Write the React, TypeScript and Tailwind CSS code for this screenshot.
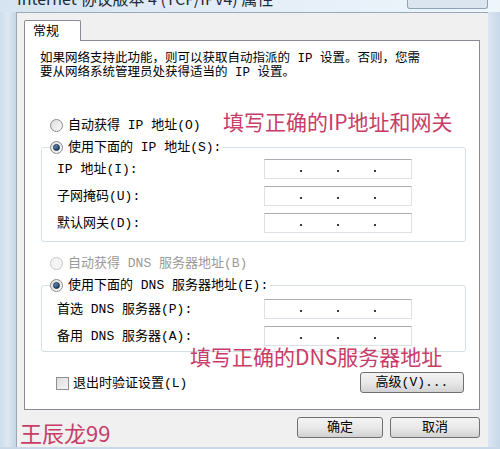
const dialogFont = {
  fontFamily: '"Liberation Mono", "Noto Sans CJK SC", monospace',
}
const noteFont = {
  fontFamily: '"Noto Sans CJK SC", "Noto Sans", sans-serif',
}

function Radio({ checked = false, disabled = false }: { checked?: boolean; disabled?: boolean }) {
  return (
    <span
      className={`flex h-[13px] w-[13px] shrink-0 items-center justify-center rounded-full border ${
        disabled
          ? 'border-[#c6c6c6] bg-[#f4f4f4]'
          : 'border-[#8a8a8a] bg-linear-to-br from-[#dcdcdc] to-[#fbfbfb]'
      }`}
    >
      {checked && (
        <span className="h-[7px] w-[7px] rounded-full border border-[#1d2a3a] bg-linear-to-br from-[#6aa5db] to-[#15314f]" />
      )}
    </span>
  )
}

function RadioRow({
  label,
  checked,
  disabled,
}: {
  label: string
  checked?: boolean
  disabled?: boolean
}) {
  return (
    <div className="flex h-[16px] items-center gap-[5px]">
      <Radio checked={checked} disabled={disabled} />
      <span className={`whitespace-pre ${disabled ? 'text-[#9a9a9a]' : 'text-black'}`}>{label}</span>
    </div>
  )
}

function IpBox() {
  return (
    <div className="flex h-[20px] w-[148px] items-end border border-[#dde1e7] border-t-[#a9acb2] bg-white pb-[6px]">
      <span className="flex-1" />
      <span className="h-[2px] w-[2px] bg-[#3c3c3c]" />
      <span className="flex-1" />
      <span className="h-[2px] w-[2px] bg-[#3c3c3c]" />
      <span className="flex-1" />
      <span className="h-[2px] w-[2px] bg-[#3c3c3c]" />
      <span className="flex-1" />
    </div>
  )
}

function FieldRow({ label }: { label: string }) {
  return (
    <div className="flex items-center">
      <span className="ml-[8px] w-[207px] whitespace-pre">{label}</span>
      <IpBox />
    </div>
  )
}

function WinButton({ label, width }: { label: string; width: string }) {
  return (
    <button
      className={`flex h-[21px] ${width} items-center justify-center rounded-[3px] border border-[#707070] bg-linear-to-b from-[#f3f3f3] via-[#e9e9e9] to-[#d2d2d2] text-[13px] text-black`}
    >
      {label}
    </button>
  )
}

export default function App() {
  return (
    <div
      className="relative flex h-[449px] w-[500px] flex-col overflow-hidden bg-[#d2e0ed] text-[13px] leading-[13px]"
      style={dialogFont}
    >
      {/* title bar, only the lower edge is visible */}
      <div className="flex h-[12px] shrink-0 overflow-hidden bg-linear-to-r from-[#d6e4f1] via-[#e4eef8] to-[#eef5fb]">
        <div className="flex-1 overflow-hidden pl-[17px]">
          <div
            className="-mt-[10px] whitespace-pre text-[16px] leading-[16px] text-[#1e2b38]"
            style={noteFont}
          >
            Internet 协议版本 4 (TCP/IPv4) 属性
          </div>
        </div>
        <div className="mr-[12px] h-[9px] w-[81px] rounded-b-[3px] border border-t-0 border-[#8fa2b7] bg-[#dbe5ef]" />
      </div>

      <div className="flex min-h-0 flex-1">
        <div className="w-[16px] shrink-0 bg-linear-to-r from-[#cfdeec] via-[#dde8f2] to-[#c4d5e6]" />

        <div className="flex h-[435px] w-[472px] shrink-0 flex-col border-l border-t border-[#9ba8b6] bg-[#f0f0f0] pl-[7px] pr-[8px] pt-[7px]">
          {/* tab */}
          <div className="relative z-10 flex h-[21px] w-[57px] items-center rounded-t-[2px] border border-b-0 border-[#898c95] bg-white pl-[8px]">
            常规
          </div>

          {/* panel */}
          <div className="-mt-px flex h-[370px] w-[456px] flex-col border border-[#898c95] bg-white">
            <p className="ml-[15px] mt-[12px] whitespace-pre text-[12.5px] leading-[13.5px]">
              如果网络支持此功能，则可以获取自动指派的 IP 设置。否则，您需{'\n'}要从网络系统管理员处获得适当的 IP 设置。
            </p>

            <div className="ml-[25px] mt-[37px]">
              <RadioRow label="自动获得 IP 地址(O)" />
            </div>

            <fieldset className="ml-[16px] mt-[6px] w-[425px] rounded-[3px] border border-[#d5dfe5] pb-[8px] pl-[7px]">
              <legend className="ml-px pr-[2px]">
                <RadioRow label="使用下面的 IP 地址(S):" checked />
              </legend>
              <div className="mt-[4px] flex flex-col gap-[7px]">
                <FieldRow label="IP 地址(I):" />
                <FieldRow label="子网掩码(U):" />
                <FieldRow label="默认网关(D):" />
              </div>
            </fieldset>

            <div className="ml-[25px] mt-[13px]">
              <RadioRow label="自动获得 DNS 服务器地址(B)" disabled />
            </div>

            <fieldset className="ml-[16px] mt-[6px] w-[425px] rounded-[3px] border border-[#d5dfe5] pb-[5px] pl-[7px]">
              <legend className="ml-px pr-[2px]">
                <RadioRow label="使用下面的 DNS 服务器地址(E):" checked />
              </legend>
              <div className="mt-[6px] flex flex-col gap-[7px]">
                <FieldRow label="首选 DNS 服务器(P):" />
                <FieldRow label="备用 DNS 服务器(A):" />
              </div>
            </fieldset>

            <div className="ml-[31px] mr-[15px] mt-[20px] flex items-center justify-between">
              <div className="flex items-center gap-[4px] pt-[2px]">
                <span className="h-[13px] w-[13px] border border-[#8e8f8f] bg-linear-to-br from-[#dcdcdc] to-[#f8f8f8]" />
                <span className="whitespace-pre">退出时验证设置(L)</span>
              </div>
              <WinButton label="高级(V)..." width="w-[104px]" />
            </div>
          </div>

          {/* dialog buttons */}
          <div className="mt-[7px] flex justify-end gap-[7px]">
            <WinButton label="确定" width="w-[86px]" />
            <WinButton label="取消" width="w-[90px]" />
          </div>
        </div>

        <div className="flex-1 bg-linear-to-r from-[#dbe6f1] to-[#c8d8e8]" />
      </div>
      <div className="h-[2px] shrink-0 bg-[#c8d8e8]" />

      {/* annotations drawn over the screenshot */}
      <div
        className="absolute left-[223px] top-[111px] whitespace-pre text-[21px] leading-none text-[#c83c68]"
        style={noteFont}
      >
        填写正确的IP地址和网关
      </div>
      <div
        className="absolute left-[190px] top-[346px] whitespace-pre text-[21px] leading-none text-[#c83c68]"
        style={noteFont}
      >
        填写正确的DNS服务器地址
      </div>
      <div
        className="absolute left-[20px] top-[421px] whitespace-pre text-[22px] leading-none text-[#c83c68]"
        style={noteFont}
      >
        王辰龙99
      </div>
    </div>
  )
}
